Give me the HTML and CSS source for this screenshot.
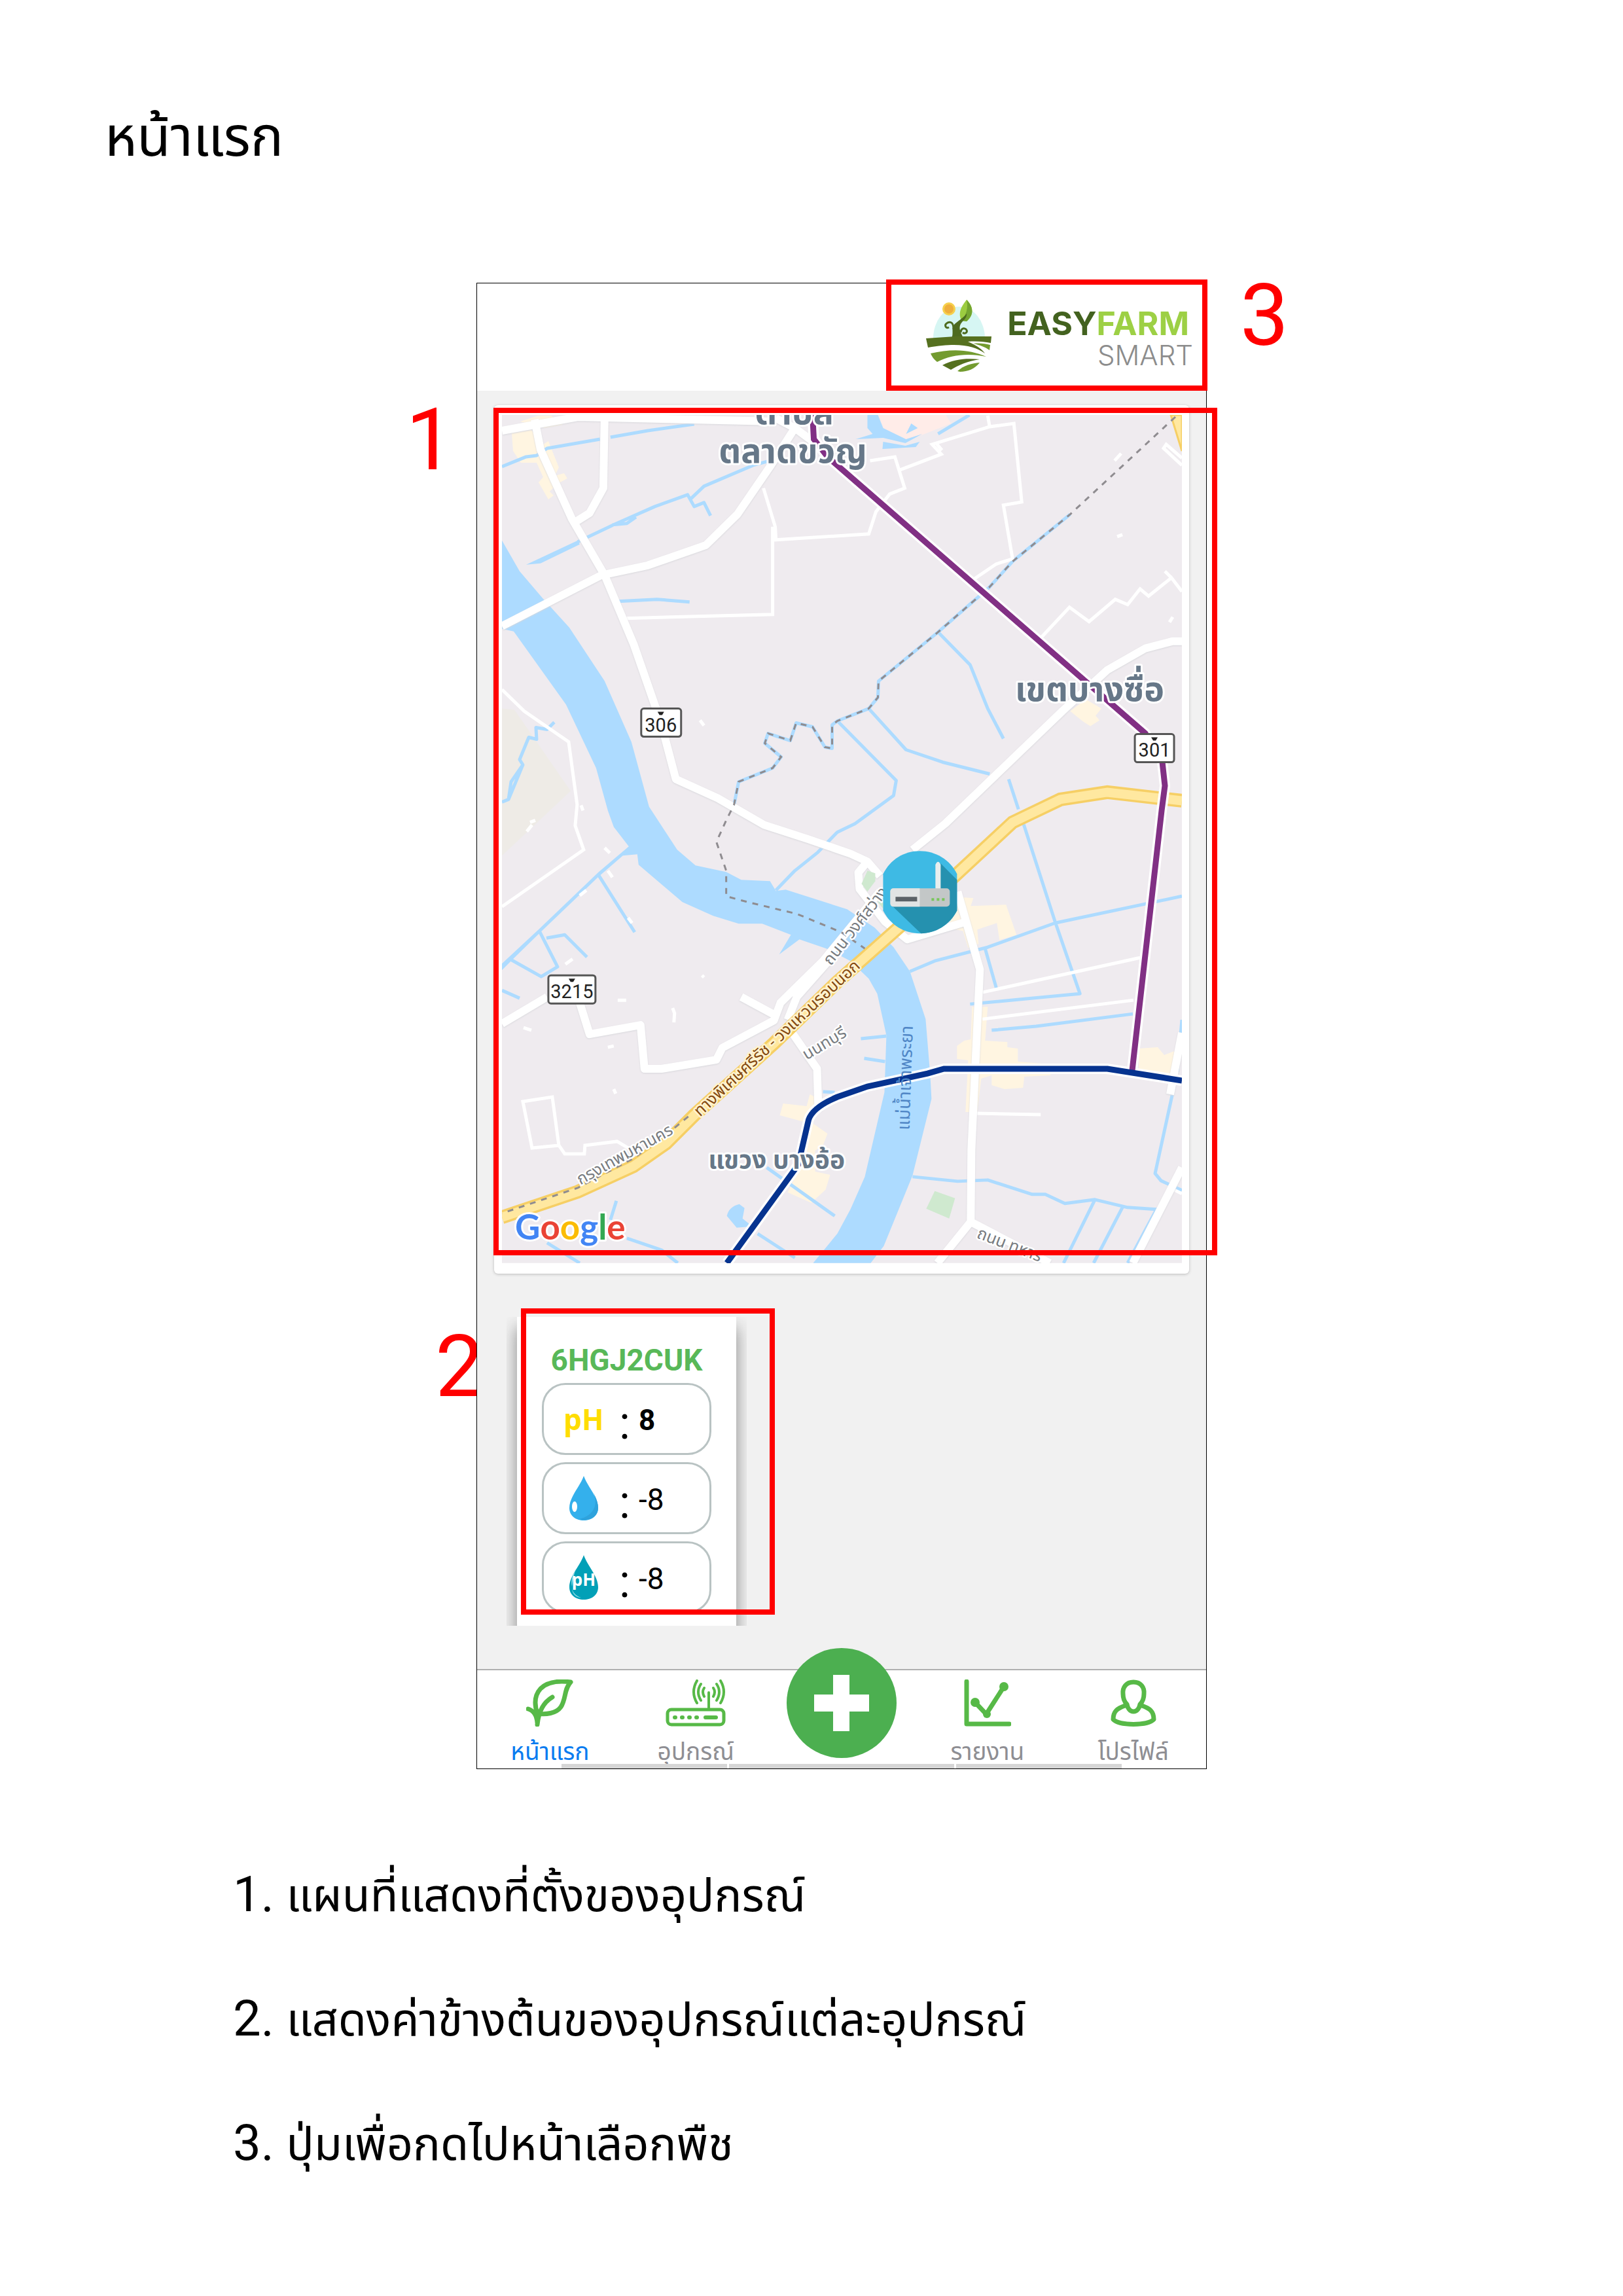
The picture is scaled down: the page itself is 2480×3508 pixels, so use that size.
FILE: index.html
```html
<!DOCTYPE html>
<html lang="th">
<head>
<meta charset="utf-8">
<meta name="viewport" content="width=device-width, initial-scale=1">
<title>หน้าแรก</title>
<link rel="stylesheet" href="styles.css">
</head>
<body>
<main class="page">
  <h1 class="page-title">หน้าแรก</h1>

  <figure class="guide">
    <div class="stage">
      <div class="phone">
        <header class="topbar">
          <button class="brand" type="button" aria-label="EASYFARM SMART">
            <svg class="brand-mark" viewBox="0 0 100 112" aria-hidden="true">
              <path d="M11 60A39 48 0 0 1 90 60Z" fill="#d6f6f3"/>
              <circle cx="35" cy="15" r="10" fill="#f6d04c"/><circle cx="35" cy="15" r="7" fill="#eeae3c"/>
              <path d="M62 1C70 9 76 22 62 34L54 33C48 20 55 10 62 1Z" fill="#9ccc40"/>
              <path d="M62 1C64 10 63 19 58 28L54 33L62 34C76 22 70 9 62 1Z" fill="#74a52f"/>
              <path d="M39 60C43 50 37 44 45 37C52 31 58 28 62 22C63 29 56 33 53 38C49 46 54 52 57 60Z" fill="#4d6b1e"/>
              <path d="M42 46C42 36 38 34 33 36C27 39 30 46 35 43M53 51C53 46 57 43 61 46C65 50 60 54 56 51" fill="none" stroke="#4d6b1e" stroke-width="3"/>
              <path d="M0 60L30 58L45 57L100 57L99 67C88 65 78 64 64 65C78 71 86 77 90 83C73 71 50 66 3 74Z" fill="#55701f"/>
              <path d="M72 68C82 67 91 68 98 70L97 78C90 73 82 70 72 68ZM7 83C40 75 68 77 92 88C65 82 38 85 17 96C12 92 9 88 7 83Z" fill="#739b2f"/>
              <path d="M25 101C43 91 63 90 82 92C63 95 49 101 38 108Z" fill="#55701f"/>
              <path d="M48 110C58 101 70 98 82 97C75 106 64 111 52 111Z" fill="#739b2f"/>
            </svg>
            <span class="brand-text">
              <span class="brand-name"><span class="brand-easy">EASY</span><span class="brand-farm">FARM</span></span>
              <span class="brand-sub">SMART</span>
            </span>
          </button>
        </header>

        <section class="content">
          <div class="map-card">
            <svg class="map" viewBox="767 635 1040 1297" role="img" aria-label="แผนที่">
              <rect x="767" y="635" width="1040" height="1297" fill="#efebef"/>
              <path d="M767 1084L786 1086L872 1210L767 1309Z" fill="#eeebe6"/>
              <g fill="#fff5e1">
                <path d="M782 663L812 658L830 680L838 675L848 700L854 715L848 728L862 724L867 732L852 740L840 752L846 758L838 764L823 738L830 730L820 708L796 708L784 690ZM795 645L822 636L842 636L860 650L832 655Z"/>
                <path d="M1636 1088L1660 1070L1684 1084L1675 1095L1681 1102L1667 1111L1656 1104Z"/>
                <path d="M1462 1372L1488 1374L1484 1386L1538 1384L1554 1430L1528 1438L1524 1412L1494 1422L1496 1444L1480 1450L1472 1424L1450 1420Z"/>
                <path d="M1486 1540H1510L1506 1592L1540 1594V1602L1556 1604V1624L1606 1628V1645L1566 1647L1564 1664L1536 1666L1516 1660V1645L1500 1650L1494 1701H1476L1480 1622L1463 1620V1600L1474 1592L1484 1590Z"/>
                <path d="M1741 1604L1770 1602L1780 1614L1795 1608V1662L1741 1640Z"/>
                <path d="M1192 1706L1197 1688L1233 1692L1238 1674L1246 1678L1242 1718L1265 1734L1258 1752L1246 1760V1792L1269 1797L1262 1820L1240 1840L1204 1824L1216 1800L1228 1750L1236 1718Z"/>
              </g>
              <path d="M1343 635H1446L1454 648L1383 676L1352 658Z" fill="#ffece8"/>
              <g fill="#cfe9cf"><path d="M1429 1822L1460 1833L1451 1864L1416 1849Z"/><path d="M1350 1372L1342 1380L1350 1390Z"/></g>
              <g fill="#addbff">
                <path d="M767 827L794 874L829 915L870 960L924 1042L965 1135L992 1234L1035 1300L1063 1324L1110 1334L1133 1346L1177 1348L1186 1363L1201 1361L1295 1391L1337 1419L1366 1449L1391 1486L1415 1559L1422 1644L1424 1681L1395 1798L1351 1906L1331 1932H1243L1280 1887L1300 1850L1322 1800L1352 1671L1355 1584L1341 1520L1328 1497L1300 1470L1263 1451L1222 1437L1191 1460L1209 1430L1165 1413H1129L1090 1401L1043 1380L976 1323L974 1307L952 1309L915 1341L826 1426L786 1465L767 1484V1474L824 1421L915 1334L961 1295L938 1265L929 1240L911 1175L865 1078L785 966L767 962Z"/>
                <path d="M804 864L883 827L886 833L826 862ZM1326 635H1342L1350 655L1385 672L1410 664L1384 678L1350 670L1308 672L1334 664L1326 655ZM1350 676L1384 682L1406 676L1400 684L1349 687ZM1393 648L1403 655L1385 664Z"/>
                <path d="M1111 1860Q1114 1846 1130 1842L1138 1848L1135 1864L1150 1876L1126 1878Z"/>
              </g>
              <g class="canal">
                <path d="M767 714L804 699L820 697L836 686L917 672M933 669L990 659L1061 649M883 829L940 802L1001 775L1051 757L1061 775L1076 769L1086 789M1056 763L1076 744L1151 712L1177 705M945 920L1004 917L1054 921M936 803L958 801L972 791M1434 664L1482 635"/>
                <path d="M767 1227L777 1223L799 1170L794 1162L808 1128L820 1131L819 1113L836 1116L847 1105M799 1170L781 1196L777 1223"/>
                <path d="M1280 1103L1370 1194L1366 1217L1307 1260L1280 1273L1250 1304L1215 1332L1186 1362M1328 1084L1385 1147L1441 1166L1513 1184M1435 968L1483 1017L1510 1084L1534 1130M1542 1192L1557 1238M1565 1261L1613 1410L1651 1520L1483 1536M1807 1371L1613 1412L1510 1449L1429 1470L1391 1486M1506 1451L1523 1511M1516 1576L1584 1570L1732 1551M1316 1589L1355 1585M1321 1619L1353 1624"/>
                <path d="M1395 1800L1464 1807L1510 1805L1578 1827H1598L1628 1841L1674 1835L1724 1847L1768 1850L1724 1932M1674 1835L1626 1932M1716 1847L1672 1932M1795 1662L1766 1795L1775 1806L1807 1821M1807 1560L1800 1640"/>
                <path d="M824 1424L852 1479L827 1494L779 1467M835 1435L863 1430L897 1464M915 1339L970 1426M767 1515L794 1527M1172 1786L1276 1860M1158 1887L1215 1924M958 1894L1011 1912L1036 1932M836 1901L886 1932M942 1837L933 1866M1258 1670L1276 1671"/>
                <path d="M1636 787L1548 859L1512 899L1433 968L1343 1042L1342 1067L1328 1084L1280 1103L1272 1109V1145L1261 1143L1242 1112L1217 1106L1208 1133L1174 1122L1169 1137L1194 1158L1181 1175L1129 1196L1122 1231"/>
              </g>
              <g class="lane">
                <path d="M1167 747L1185 806L1186 826L1328 817L1339 783L1360 756L1383 747L1368 699L1330 705M1376 719L1439 695L1425 680L1513 653L1550 648L1562 768L1534 773L1548 855L1523 863L1489 886M1510 636L1513 653M1181 806V940L956 946M1430 677L1440 689"/>
                <path d="M767 1055L801 1088L869 1135L882 1231L879 1263L892 1300L767 1387"/>
                <path d="M1592 975L1635 929L1665 951L1705 917L1724 925L1743 901L1756 912L1791 884L1807 905M1781 874L1791 884M1807 712L1779 686L1783 680L1807 701"/>
                <path d="M1502 1518L1743 1465M1502 1559L1733 1530M1492 1703L1591 1705M799 1685L844 1678L854 1752L813 1756ZM854 1752L863 1765H893L894 1752L943 1746L965 1759M1789 1817L1807 1826"/>
                <path d="M1704 705L1714 694M1708 821L1716 818M1788 952L1793 944M1070 1102L1076 1110M888 1232L891 1240M805 1272L813 1262M810 1258L818 1255M924 1297L932 1305M886 1370L896 1362M929 1332L936 1342M960 1404L966 1412M864 1475L875 1467M944 1530H957M1028 1542L1031 1550L1030 1564M800 1572L812 1576M929 1602L938 1600M938 1666L941 1673M1073 1492L1076 1495"/>
              </g>
              <g class="road">
                <path d="M767 659L883 638L1186 645M817 642L826 688L874 794L924 880L969 987L1010 1105L1033 1192L1097 1221L1168 1262L1236 1284L1300 1306L1326 1318L1345 1340M1326 1318L1312 1335L1314 1360L1353 1410L1387 1437L1477 1410"/>
                <path d="M767 958L919 880L990 865L1079 834L1127 787L1177 714L1215 655L1186 640M924 638L922 747L901 785L877 800M1215 655L1262 690"/>
                <path d="M1807 981H1793L1751 992L1693 1025L1624 1088L1445 1260L1395 1300M1464 1364L1477 1410L1498 1483L1490 1653L1485 1759L1484 1869L1433 1932M1484 1869L1605 1932"/>
                <path d="M1807 1580L1789 1674M1807 1786L1732 1932M767 1566L836 1525M886 1534L901 1582L979 1568L985 1635H1011L1095 1621L1104 1603L1183 1561L1193 1534L1258 1470L1345 1364M1204 1560L1218 1525L1270 1466M1204 1570L1249 1635L1251 1699"/>
                <path d="M1133 1525L1183 1552"/>
              </g>
              <path d="M1326 1332L1338 1336V1348L1326 1364L1317 1352Z" fill="#cfe9cf"/>
              <path class="highway-edge" d="M767 1862L883 1823L968 1784L1018 1749L1061 1706L1183 1596L1280 1502L1376 1417L1464 1336L1548 1258L1621 1223L1693 1212L1807 1225"/>
              <path class="highway" d="M767 1862L883 1823L968 1784L1018 1749L1061 1706L1183 1596L1280 1502L1376 1417L1464 1336L1548 1258L1621 1223L1693 1212L1807 1225"/>
              <path d="M1790 635H1807V690Z" fill="#ffe8a0" stroke="#f6cf65" stroke-width="3"/>
              <path class="border" d="M1797 638L1636 787L1548 859L1512 899L1433 968L1343 1042L1342 1067L1328 1084L1280 1103L1272 1109V1145L1261 1143L1242 1112L1217 1106L1208 1133L1174 1122L1169 1137L1194 1158L1181 1175L1129 1196L1122 1231L1110 1255L1095 1288L1110 1332V1371L1143 1380L1218 1398L1286 1426L1322 1451M1052 1708L1018 1736L968 1772L883 1817L767 1856"/>
              <path class="rail-case" d="M1242 635L1244 672L1265 699L1751 1122L1777 1166L1781 1202L1776 1240L1731 1637"/>
              <path class="rail-case" d="M1111 1932L1220 1782L1236 1713Q1242 1694 1280 1678L1326 1662L1418 1642L1443 1635H1693L1807 1653"/>
              <path class="purple-line" d="M1242 635L1244 672L1265 699L1751 1122L1777 1166L1781 1202L1776 1240L1731 1637"/>
              <path class="navy-line" d="M1111 1932L1220 1782L1236 1713Q1242 1694 1280 1678L1326 1662L1418 1642L1443 1635H1693L1807 1653"/>
              <g class="shield">
                <rect x="980" y="1084" width="61" height="43" rx="4"/><rect x="1735" y="1123" width="60" height="43" rx="4"/><rect x="838" y="1492" width="72" height="43" rx="4"/>
              </g>
              <path d="M1005 1089h10l-3 5h-4zM1760 1128h10l-3 5h-4zM869 1497h10l-3 5h-4z" fill="#222"/>
              <g class="shield-text"><text x="1010" y="1119">306</text><text x="1765" y="1158">301</text><text x="874" y="1527">3215</text></g>
              <g class="place">
                <text x="1214" y="649">ตำบล</text><text x="1212" y="708">ตลาดขวัญ</text><text x="1666" y="1072">เขตบางซื่อ</text><text class="place-small" x="1187" y="1787">แขวง บางอ้อ</text>
              </g>
              <g class="street">
                <text class="street-brown" transform="translate(1070 1709) rotate(-43)">ทางพิเศษศรีรัช - วงแหวนรอบนอก</text>
                <text transform="translate(887 1813) rotate(-29)">กรุงเทพมหานคร</text>
                <text transform="translate(1233 1622) rotate(-31)">นนทบุรี</text>
                <text transform="translate(1270 1478) rotate(-52)">ถนน วงศ์สว่าง</text>
                <text class="street-river" transform="translate(1390 1729) rotate(-88)">แม่น้ำเจ้าพระยา</text>
                <text transform="translate(1492 1893) rotate(21)">ถนน ทหาร</text>
              </g>
              <text class="google" x="787" y="1896"><tspan fill="#4285f4">G</tspan><tspan fill="#ea4335">o</tspan><tspan fill="#fbbc05">o</tspan><tspan fill="#4285f4">g</tspan><tspan fill="#34a853">l</tspan><tspan fill="#ea4335">e</tspan></text>
              <g>
                <path d="M1350 1337C1361 1315 1382 1302 1406 1302S1452 1315 1463 1337V1393C1452 1415 1430 1428 1406 1428S1361 1415 1350 1393Z" fill="#3ebae4"/>
                <path d="M1438 1321L1463 1346V1393C1452 1415 1430 1428 1408 1428L1364 1386L1430 1360Z" fill="#2591af"/>
                <path d="M1430 1360V1323Q1434 1314 1438 1323V1360Z" fill="#e9eeee"/>
                <rect x="1361" y="1359" width="91" height="28" rx="5" fill="#c3c7c7"/>
                <path d="M1406 1359H1366Q1361 1359 1361 1364V1382Q1361 1387 1366 1387H1406Z" fill="#e1e4e4"/>
                <path d="M1369 1372h33v7h-33z" fill="#5b6267"/>
                <path d="M1424 1374h4v4h-4zM1432 1374h4v4h-4zM1440 1374h4v4h-4z" fill="#79c65b"/>
              </g>
            </svg>
          </div>

          <div class="devices">
            <article class="device">
              <h2 class="device-id">6HGJ2CUK</h2>
              <ul class="readings">
                <li class="reading"><span class="reading-icon reading-ph">pH</span><span class="colon">:</span><span class="value value-strong">8</span></li>
                <li class="reading">
                  <span class="reading-icon"><svg class="drop" viewBox="0 0 44 68" aria-hidden="true"><path d="M22 0C28 17 44 32 44 49C44 61 34 68 22 68S0 61 0 49C0 32 16 17 22 0Z" fill="#34b0ec"/><path d="M36 24C46 44 36 62 14 66C32 71 44 61 44 49C44 40 40 32 36 24Z" fill="#2ea2dc"/><ellipse cx="8" cy="47" rx="4" ry="8" fill="#fff"/></svg></span>
                  <span class="colon">:</span><span class="value">-8</span></li>
                <li class="reading">
                  <span class="reading-icon"><svg class="drop" viewBox="0 0 44 68" aria-hidden="true"><path d="M22 0C28 17 44 32 44 49C44 61 34 68 22 68S0 61 0 49C0 32 16 17 22 0Z" fill="#02a0b7"/><path d="M10 21C5 30 2 38 4 48C5 38 7 29 10 21ZM4 52C7 60 12 63 18 65C11 65 5 60 4 52Z" fill="#9be0ea"/><text class="drop-text" x="22" y="47">pH</text></svg></span>
                  <span class="colon">:</span><span class="value">-8</span></li>
              </ul>
            </article>
          </div>
        </section>

        <nav class="tabbar">
          <a class="tab tab-active" href="#home">
            <svg class="tab-icon" viewBox="0 0 72 72" aria-hidden="true"><path d="M68 4C52 2 34 2 22 14C12 25 13 40 17 52C30 54 46 52 53 42C61 30 58 14 68 4ZM40 27C28 34 19 48 17 69M3 45C10 47 16 54 17 66"/></svg>
            <span>หน้าแรก</span></a>
          <a class="tab" href="#devices">
            <svg class="tab-icon tab-icon-wide" viewBox="0 0 92 72" aria-hidden="true"><rect x="3" y="46" width="86" height="23" rx="6"/><path d="M66 20V45M59 13Q55 19 59 26M73 13Q77 19 73 26M54 7Q46 19 54 32M78 7Q86 19 78 32M48 2Q38 19 48 36M84 2Q94 19 84 36" stroke-width="4"/><path d="M14 58H15M25 58H26M36 58H37M47 58H48" stroke-width="6"/><path d="M61 58H77" stroke-width="6"/></svg>
            <span>อุปกรณ์</span></a>
          <button class="fab" type="button" aria-label="เพิ่ม"><svg class="fab-icon" viewBox="0 0 84 86" aria-hidden="true"><path d="M29 0H54V30H84V56H54V86H29V56H0V30H29Z" fill="#fff"/></svg></button>
          <a class="tab" href="#reports">
            <svg class="tab-icon" viewBox="0 0 72 72" aria-hidden="true"><path d="M4 3V68H69M17 35L34 53L61 11" /><g fill="#57b947" stroke="none"><circle cx="17" cy="35" r="7"/><circle cx="35" cy="53" r="6"/><circle cx="61" cy="11" r="7"/></g></svg>
            <span>รายงาน</span></a>
          <a class="tab" href="#profile">
            <svg class="tab-icon" viewBox="0 0 72 72" aria-hidden="true"><path d="M36 4C47 4 53 12 52 22C52 29 50 34 46 38C45 43 42 49 36 49S27 43 26 38C22 34 20 29 20 22C19 12 25 4 36 4ZM23 40C12 44 5 48 5 61C14 71 58 71 67 61C67 48 60 44 49 40"/></svg>
            <span>โปรไฟล์</span></a>
          <div class="home-bar"><i></i><i></i><i></i></div>
        </nav>
      </div>

      <div class="box box-logo"></div>
      <div class="box box-map"></div>
      <div class="box box-device"></div>
      <span class="num num-one">1</span>
      <span class="num num-two">2</span>
      <span class="num num-three">3</span>
    </div>

    <figcaption>
      <ol class="notes">
        <li>แผนที่แสดงที่ตั้งของอุปกรณ์</li>
        <li>แสดงค่าข้างต้นของอุปกรณ์แต่ละอุปกรณ์</li>
        <li>ปุ่มเพื่อกดไปหน้าเลือกพืช</li>
      </ol>
    </figcaption>
  </figure>
</main>
</body>
</html>
```
FILE: styles.css
```css
* { box-sizing: border-box; }

body {
  margin: 0;
  background: #fff;
  color: #000;
  font-family: Roboto, "Noto Sans Thai", "Noto Sans", sans-serif;
}

.page { padding: 144px 0 80px; }

.page-title {
  margin: 0 0 156px 160px;
  font-size: 84px;
  line-height: 132px;
  font-weight: 400;
}

.guide { margin: 0; }

.stage {
  position: relative;
  isolation: isolate;
  width: 1116px;
  max-width: 100%;
  margin: 0 auto;
  left: 46px;
}

.phone {
  position: relative;
  z-index: 1;
  display: flex;
  flex-direction: column;
  border: 1px solid #000;
  background: #f1f1f1;
}

.topbar {
  display: flex;
  justify-content: flex-end;
  padding: 24px 20px 28px;
  background: #fff;
}

.brand {
  display: flex;
  align-items: center;
  gap: 24px;
  padding: 0;
  border: 0;
  background: none;
  font-family: Inter, sans-serif;
}

.brand-mark { width: 100px; height: 112px; }

.brand-text { display: flex; flex-direction: column; align-items: flex-end; padding-top: 12px; }

.brand-name { margin-right: 6px; font-size: 50px; line-height: 48px; font-weight: 700; }
.brand-easy { color: #43621f; }
.brand-farm { color: #9dd045; }
.brand-sub { font-size: 42px; line-height: 50px; font-weight: 300; color: #8c8c8c; }

.content { padding: 22px 26px 66px; }

.map-card {
  padding: 15px 11px 16px 12px;
  border-radius: 6px;
  background: #fff;
  box-shadow: 0 1px 4px #bbb;
}

.map { display: block; width: 100%; height: auto; font-family: Roboto, "Noto Sans Thai", "Noto Sans", sans-serif; }

.canal { fill: none; stroke: #addbff; stroke-width: 5; stroke-linejoin: round; }
.lane { fill: none; stroke: #fff; stroke-width: 5; }
.road { fill: none; stroke: #fff; stroke-width: 12; stroke-linejoin: round; filter: drop-shadow(0 1px 1px #d8d8dc); }
.highway-edge { fill: none; stroke: #f6cf65; stroke-width: 21; }
.highway { fill: none; stroke: #ffe8a0; stroke-width: 14; }
.border { fill: none; stroke: #8f8c90; stroke-width: 3; stroke-dasharray: 9 9; }
.rail-case { fill: none; stroke: #fff; stroke-width: 16; }
.purple-line { fill: none; stroke: #813084; stroke-width: 9; }
.navy-line { fill: none; stroke: #06338f; stroke-width: 9; }

.shield { fill: #fff; stroke: #555; stroke-width: 3; }
.shield-text { font-size: 29px; text-anchor: middle; fill: #222; }

.place {
  font-size: 52px;
  font-weight: 700;
  text-anchor: middle;
  fill: #667788;
  stroke: #fff;
  stroke-width: 6;
  stroke-linejoin: round;
  paint-order: stroke;
}
.place-small { font-size: 39px; }

.street {
  font-size: 25px;
  fill: #777b80;
  stroke: #fff;
  stroke-width: 5;
  stroke-linejoin: round;
  paint-order: stroke;
}
.street-brown { fill: #84490f; stroke: #fff3cf; }
.street-river { font-size: 27px; fill: #4f86c6; stroke: none; }

.google {
  font-family: Lato, sans-serif;
  font-size: 53px;
  font-weight: 700;
  stroke: #fff;
  stroke-width: 6;
  stroke-linejoin: round;
  paint-order: stroke;
}

.devices {
  width: 367px;
  height: 472px;
  margin: 66px 0 0 19px;
  padding: 0 16px;
  overflow: hidden;
}

.device {
  height: 520px;
  padding: 40px 38px;
  background: #fff;
  box-shadow: 0 16px 24px #888;
}

.device-id {
  margin: 0 0 9px;
  font-size: 46px;
  line-height: 52px;
  font-weight: 700;
  text-align: center;
  color: #58b858;
}

.readings { display: flex; flex-direction: column; gap: 11px; margin: 0; padding: 0; list-style: none; }

.reading {
  display: grid;
  grid-template-columns: 68px 20px 1fr;
  align-items: center;
  column-gap: 20px;
  height: 110px;
  padding-left: 27px;
  border: 3px solid #b9c3c3;
  border-radius: 36px;
}

.reading-icon { display: flex; justify-content: center; }
.reading-ph { font-family: "Noto Sans", sans-serif; font-size: 44px; font-weight: 700; line-height: 48px; color: #ffdd00; }
.drop { width: 44px; height: 68px; }
.drop-text { font-family: "Noto Sans", sans-serif; font-size: 26px; font-weight: 700; text-anchor: middle; fill: #fff; }
.colon { padding-top: 12px; font-size: 70px; line-height: 60px; }
.value { margin-left: -10px; padding-top: 4px; font-size: 46px; line-height: 52px; }
.value-strong { font-size: 44px; font-weight: 700; }

.tabbar {
  position: relative;
  display: grid;
  grid-template-columns: repeat(5, 1fr);
  height: 152px;
  border-top: 2px solid #b0b0b0;
  background: #fff;
}

.tab {
  display: flex;
  flex-direction: column;
  align-items: center;
  gap: 15px;
  padding-top: 14px;
  font-size: 37px;
  line-height: 48px;
  color: #8e8e93;
  text-decoration: none;
}
.tab-active { color: #0a7cf0; }

.tab-icon {
  width: 72px;
  height: 72px;
  fill: none;
  stroke: #57b947;
  stroke-width: 7;
  stroke-linecap: round;
  stroke-linejoin: round;
}
.tab-icon-wide { width: 92px; stroke-width: 5; }

.fab {
  display: grid;
  place-items: center;
  justify-self: center;
  width: 168px;
  height: 168px;
  margin-top: -34px;
  padding: 0;
  border: 0;
  border-radius: 50%;
  background: #4caf50;
}
.fab-icon { width: 84px; height: 86px; }

.home-bar {
  position: absolute;
  bottom: 0;
  left: 129px;
  right: 129px;
  display: grid;
  grid-template-columns: 253px 1fr 253px;
  gap: 3px;
  height: 7px;
}
.home-bar i { background: #d6d6d6; }

/* Red call-outs drawn over the screen */
.box { position: absolute; z-index: 2; border: 8px solid #f00; }
.box-logo { top: -5px; right: -1px; width: 491px; height: 170px; }
.box-map { top: 191px; left: 26px; right: -16px; height: 1295px; }
.box-device { top: 1567px; left: 68px; width: 388px; height: 468px; }

.num {
  position: absolute;
  font-size: 132px;
  line-height: 132px;
  color: #f00;
}
.num-one { top: 174px; left: -108px; }
.num-two { top: 1590px; left: -63px; }
.num-three { top: -16px; left: 1167px; }

.notes {
  margin: 0;
  padding: 96px 0 0 356px;
  list-style-position: inside;
  font-size: 70px;
  line-height: 190px;
}
.notes li { height: 190px; }
.notes li::marker { font-size: 76px; }
```
